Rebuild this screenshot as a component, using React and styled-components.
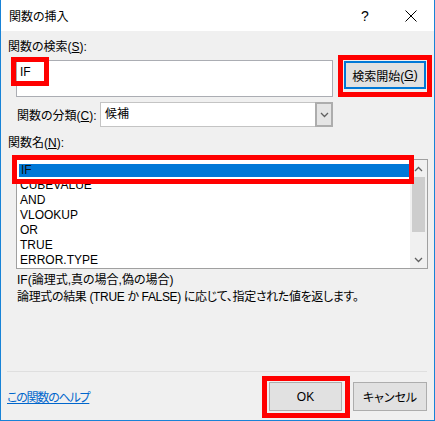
import React from 'react'
import styled, { createGlobalStyle } from 'styled-components'

const GlobalStyle = createGlobalStyle`
  html, body {
    margin: 0;
    padding: 0;
    background: #fff;
  }
  body {
    font-family: "Liberation Sans", "Noto Sans CJK JP", sans-serif;
    font-size: 12px;
    font-feature-settings: "palt";
    color: #000;
  }
`

const Window = styled.div`
  box-sizing: border-box;
  width: 435px;
  height: 421px;
  border: 1px solid #1883d7;
  border-top: none;
  display: flex;
  flex-direction: column;
  overflow: hidden;
`

const TitleBar = styled.div`
  height: 31px;
  flex: none;
  display: flex;
  align-items: center;
  background: #fff;
  padding-left: 8px;
`

const Title = styled.div`
  flex: 1;
  font-size: 12px;
  color: #000;
`

const CaptionButton = styled.div`
  width: 46px;
  height: 31px;
  display: flex;
  align-items: center;
  justify-content: center;
  font-size: 14px;
  color: #000;
`

const Body = styled.div`
  flex: 1;
  display: flex;
  flex-direction: column;
  background: #f0f0f0;
  padding: 8px 7px 0 6px;
`

const Label = styled.div`
  line-height: 16px;
  height: 16px;
  margin-left: ${p => p.indent || 1}px;
  margin-top: ${p => p.top || 0}px;
  white-space: nowrap;
`

const Highlight = styled.div`
  position: absolute;
  left: ${p => p.l}px;
  top: ${p => p.t}px;
  width: ${p => p.w}px;
  height: ${p => p.h}px;
  box-sizing: border-box;
  border: 5px solid #ff0000;
  pointer-events: none;
`

const SearchRow = styled.div`
  display: flex;
  align-items: flex-start;
  margin-top: 5px;
  margin-left: 9px;
`

const InputWrap = styled.div`
  position: relative;
`

const SearchInput = styled.div`
  box-sizing: border-box;
  width: 317px;
  height: 37px;
  background: #fff;
  border: 1px solid #abadb3;
  padding: 4px 3px;
  line-height: 15px;
`

const ButtonWrap = styled.div`
  position: relative;
  margin-left: ${p => p.gap || 0}px;
  margin-top: ${p => p.top || 0}px;
`

const Button = styled.div`
  box-sizing: border-box;
  width: ${p => p.w}px;
  height: ${p => p.h}px;
  display: flex;
  align-items: center;
  justify-content: center;
  background: #e1e1e1;
  border: ${p => (p.focused ? '2px solid #0078d7' : '1px solid #adadad')};
  color: #000;
  white-space: nowrap;
`

const CategoryRow = styled.div`
  display: flex;
  align-items: center;
  margin-top: 5px;
  margin-left: 10px;
`

const CategoryLabel = styled.span`
  width: 79px;
  white-space: nowrap;
`

const Select = styled.div`
  box-sizing: border-box;
  width: 233px;
  height: 25px;
  margin-left: 4px;
  display: flex;
  background: #fff;
  border: 1px solid #c4c4c4;
`

const SelectValue = styled.div`
  flex: 1;
  padding-left: 4px;
  line-height: 23px;
`

const DropButton = styled.div`
  box-sizing: border-box;
  width: 18px;
  margin: -1px -1px -1px 0;
  display: flex;
  align-items: center;
  justify-content: center;
  background: #e5e5e5;
  border: 2px solid #adadad;
`

const ListWrap = styled.div`
  position: relative;
  margin-top: 8px;
  margin-left: 9px;
`

const ListBox = styled.div`
  box-sizing: border-box;
  width: 412px;
  height: 110px;
  display: flex;
  background: #fff;
  border: 1px solid #a0a0a0;
`

const Items = styled.div`
  flex: 1;
  padding-top: 3px;
`

const Item = styled.div`
  height: 15px;
  line-height: 15px;
  padding-left: 3px;
  margin-left: ${p => (p.selected ? 1 : 0)}px;
  background: ${p => (p.selected ? '#0078d7' : 'transparent')};
  box-shadow: ${p => (p.selected ? 'inset 0 0 0 1px #ffffff' : 'none')};
  color: ${p => (p.selected ? '#111' : '#000')};
`

const ScrollBar = styled.div`
  width: 17px;
  display: flex;
  flex-direction: column;
  background: #f0f0f0;
`

const ScrollArrow = styled.div`
  height: 17px;
  display: flex;
  align-items: center;
  justify-content: center;
`

const Thumb = styled.div`
  height: 55px;
  margin: 0 2px;
  background: #cdcdcd;
`

const ScrollSpace = styled.div`
  flex: 1;
`

const Description = styled.div`
  margin-left: 10px;
  line-height: 17px;
  margin-top: ${p => p.top || 0}px;
  letter-spacing: ${p => (p.tight ? '-0.35px' : '0')};
  white-space: nowrap;
`

const Separator = styled.div`
  margin-top: auto;
  height: 1px;
  background: #dfdfdf;
`

const Footer = styled.div`
  display: flex;
  align-items: center;
  margin-top: 10px;
  margin-bottom: 9px;
`

const LinkCell = styled.div`
  flex: 1;
`

const HelpLink = styled.a`
  color: #0066cc;
  text-decoration: underline;
  letter-spacing: -1.2px;
  cursor: pointer;
`

const Chevron = ({ up }) => (
  <svg width="9" height="6" viewBox="0 0 9 6">
    <path
      d={up ? 'M1 5 L4.5 1.5 L8 5' : 'M1 1 L4.5 4.5 L8 1'}
      fill="none"
      stroke="#606060"
      strokeWidth="1.3"
    />
  </svg>
)

const CloseIcon = () => (
  <svg width="12" height="12" viewBox="0 0 12 12">
    <path d="M0.5 0.5 L11.5 11.5 M11.5 0.5 L0.5 11.5" stroke="#000" strokeWidth="1" />
  </svg>
)

const functions = ['IF', 'CUBEVALUE', 'AND', 'VLOOKUP', 'OR', 'TRUE', 'ERROR.TYPE']

export default function App() {
  return (
    <>
      <GlobalStyle />
      <Window>
        <TitleBar>
          <Title>関数の挿入</Title>
          <CaptionButton>?</CaptionButton>
          <CaptionButton>
            <CloseIcon />
          </CaptionButton>
        </TitleBar>
        <Body>
          <Label>
            関数の検索(<u>S</u>):
          </Label>
          <SearchRow>
            <InputWrap>
              <SearchInput>IF</SearchInput>
              <Highlight l={-5} t={-3} w={38} h={29} />
            </InputWrap>
            <ButtonWrap gap={11} top={1}>
              <Button w={82} h={28} focused>
                検索開始(<u>G</u>)
              </Button>
              <Highlight l={-6} t={-6} w={94} h={42} />
            </ButtonWrap>
          </SearchRow>
          <CategoryRow>
            <CategoryLabel>
              関数の分類(<u>C</u>):
            </CategoryLabel>
            <Select>
              <SelectValue>候補</SelectValue>
              <DropButton>
                <Chevron />
              </DropButton>
            </Select>
          </CategoryRow>
          <Label top={8}>
            関数名(<u>N</u>):
          </Label>
          <ListWrap>
            <ListBox>
              <Items>
                {functions.map((f, i) => (
                  <Item key={f} selected={i === 0}>
                    {f}
                  </Item>
                ))}
              </Items>
              <ScrollBar>
                <ScrollArrow>
                  <Chevron up />
                </ScrollArrow>
                <Thumb />
                <ScrollSpace />
                <ScrollArrow>
                  <Chevron />
                </ScrollArrow>
              </ScrollBar>
            </ListBox>
            <Highlight l={-4} t={-4} w={402} h={29} />
          </ListWrap>
          <Description top={3}>IF(論理式,真の場合,偽の場合)</Description>
          <Description tight>
            論理式の結果 (TRUE か FALSE) に応じて、指定された値を返します。
          </Description>
          <Separator />
          <Footer>
            <LinkCell>
              <HelpLink>この関数のヘルプ</HelpLink>
            </LinkCell>
            <ButtonWrap>
              <Button w={73} h={29}>OK</Button>
              <Highlight l={-7} t={-6} w={88} h={42} />
            </ButtonWrap>
            <ButtonWrap gap={11}>
              <Button w={74} h={29}>キャンセル</Button>
            </ButtonWrap>
          </Footer>
        </Body>
      </Window>
    </>
  )
}
